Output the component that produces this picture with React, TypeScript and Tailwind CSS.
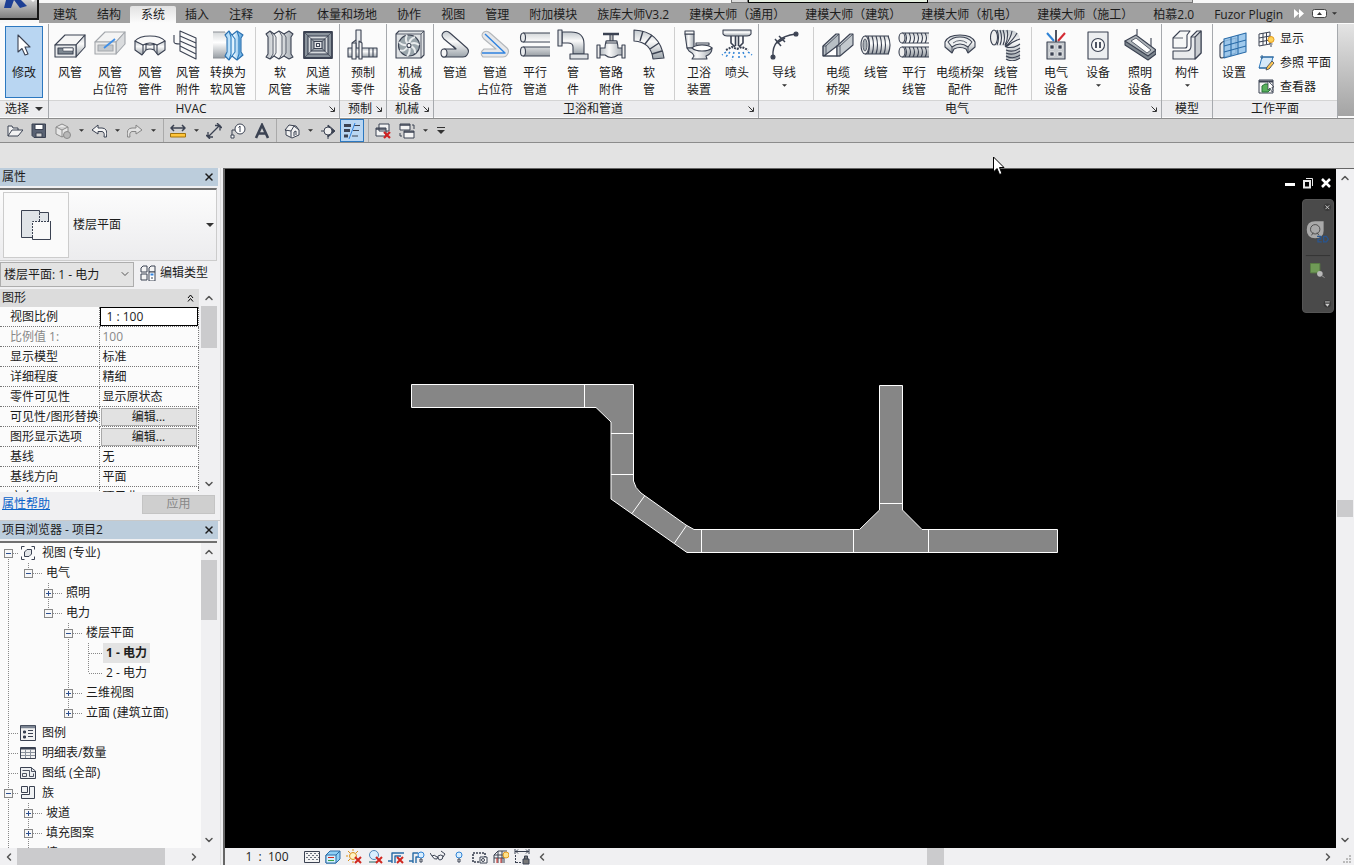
import React from "react";
import { ChevronDown, ChevronLeft, ChevronRight, ChevronUp, X } from "lucide-react";

const INK = "#3b4252";

const icons: Record<string, React.ReactNode> = {
  duct: (
    <>
      <path d="M1 16 11 6H31L22 16Z" fill="#f6f6f6" />
      <path d="M22 16 31 6V18L22 28Z" fill="url(#metal)" />
      <path d="M1 16H22V28H1Z" fill="#e8eaec" />
      <path d="M4 19H19V25H4Z" fill="#7d8791" />
      <path d="M9 19H19V22H9Z" fill="#fff" strokeWidth="0.6" />
    </>
  ),
  ductHolder: (
    <>
      <g stroke="#a3a7ac">
        <path d="M1 13 11 3H31L22 13Z" fill="#f4f4f4" />
        <path d="M22 13 31 3V15L22 25Z" fill="#dadcde" />
        <path d="M1 13H22V25H1Z" fill="#ececec" />
        <path d="M4 16H19V22H4Z" fill="#c4c8cc" />
      </g>
      <path d="M10 19 21 10" stroke="#3f8fe8" strokeWidth="1.800" />
    </>
  ),
  ductFitting: (
    <>
      <path d="M1 12V21L8 26L12 21Q16 19 20 21L24 26L31 21V12L24 14Q16 18 8 14Z" fill="url(#metal)" />
      <path d="M1 12Q5 7 16 7T31 12L23 16Q16 12 9 16Z" fill="#f9f9f9" />
      <path d="M9 16V25M23 16V25M12 15V21M20 15V21" />
    </>
  ),
  ductAccessory: (
    <>
      <path d="M8 2V22L24 30V9Z" fill="#fafafa" />
      <path d="M8 7 24 14M8 12 24 19M8 17 24 25M2 6V13Q2 15 8 15" fill="none" />
    </>
  ),
  toFlex: (
    <>
      <path d="M1 3H14V29H1Z" fill="url(#pipeH)" stroke="none" />
      <path d="M1 3H13M1 29H13" stroke="#8b9096" />
      <path d="M13 6 17 2 20 6 25 2 31 6 29 9V23L31 26 25 31 20 27 17 31 13 27 15 23V9Z" fill="url(#blue)" stroke="#2b6fae" />
      <path d="M17 2 19 8V25L17 31M25 2 27 8V25L25 31M20 6 23 10V23L20 27" fill="none" stroke="#2b7bbd" />
    </>
  ),
  flexDuct: (
    <>
      <path d="M2 5 6 2 10 5 15 2 20 5 25 2 29 5 27 8V25L29 28 25 30 20 27 15 30 10 27 6 30 2 28 4 25V8Z" fill="url(#metalV)" />
      <path d="M6 2 9 7V25L6 30M15 2 18 7V25L15 30M10 5 12 8V24L10 27M20 5 22 8V24L20 27" strokeWidth="0.800" fill="none" />
    </>
  ),
  airTerminal: (
    <>
      <path d="M2 3H30V29H2Z" fill="#8a939c" strokeWidth="1.800" />
      <path d="M6 7H26V25H6Z" fill="#d5d9dc" />
      <path d="M9 10H23V22H9Z" fill="#a1a8af" />
      <path d="M12 12.500H20V19.500H12Z" fill="#e4e6e8" />
      <path d="M2 3 12 12.500M30 3 20 12.500M2 29 12 19.500M30 29 20 19.500" strokeWidth="0.800" />
      <path d="M14.500 14.500H17.500V17.500H14.500Z" fill="#f8f8f8" />
    </>
  ),
  fabrication: (
    <>
      <path d="M9 1H14V20H9Z" fill="#eceef0" />
      <path d="M1 19H30V28H1Z" fill="url(#metal)" />
      <path d="M5 14H9V30H5ZM12 12 15 14V30H12Z" fill="#f3f3f3" />
      <path d="M5 14 9 11M22 19V28M26 19V28" fill="none" />
    </>
  ),
  mechanical: (
    <>
      <path d="M2 5 5 2H30V26L27 29H2Z" fill="#dfe2e4" />
      <path d="M2 5H27V29M27 5 30 2" fill="none" strokeWidth="0.800" />
      <circle cx="15" cy="16.500" r="10.500" fill="#9aa5ab" />
      <path d="M15 16Q10 12 13 6M15 16Q15 10 21 8M15 16Q20 12 25 16M15 16Q22 19 21 24M15 16Q17 24 13 27M15 16Q10 24 6 21M15 16Q8 17 5 13" stroke="#e9ecee" strokeWidth="2" fill="none" />
      <circle cx="15" cy="16.500" r="2" fill="#fff" />
    </>
  ),
  pipe: (
    <>
      <path d="M5 20H17L5 10Q1 6 5 3Q8 1 11 4L28 19Q31 22 28 26Q27 28 24 28H4Z" fill="url(#metal)" />
      <ellipse cx="5" cy="24" rx="3" ry="4" fill="#f5f5f5" />
      <path d="M17 20 14 17" fill="none" />
    </>
  ),
  pipeHolder: (
    <>
      <path d="M5 20H17L5 10Q1 6 5 3Q8 1 11 4L28 19Q31 22 28 26Q27 28 24 28H4Q0 24 5 20Z" fill="#e6e7e9" stroke="#b3b7bb" />
      <path d="M6 5 26 24H3" fill="none" stroke="#2f83e0" strokeWidth="1.400" />
    </>
  ),
  parallelPipe: (
    <>
      <path d="M4 4H31V13H4ZM4 18H31V27H4Z" fill="url(#pipeH)" stroke="none" />
      <path d="M4 4H31M4 13H31M4 18H31M4 27H31" />
      <ellipse cx="4" cy="8.500" rx="2.500" ry="4.500" fill="#e8eaec" />
      <ellipse cx="4" cy="22.500" rx="2.500" ry="4.500" fill="#e8eaec" />
    </>
  ),
  pipeFitting: (
    <>
      <path d="M5 3H14Q27 3 27 15V25H16V18Q16 14 11 14H5Z" fill="url(#metal)" />
      <path d="M1 1H5V17H1ZM13 25H31V30H13Z" fill="#dfe2e5" />
    </>
  ),
  valve: (
    <>
      <path d="M15 5H18V13H15Z" fill="#bbb" />
      <path d="M8 5H24" strokeWidth="2.500" />
      <path d="M5 19H10Q10 14 12 12H21Q23 14 23 19H28V26H23Q16 31 10 26H5Z" fill="url(#metalV)" />
      <path d="M2 16H5V29H2ZM27 16H30V29H27ZM11 12H22V14H11Z" fill="#eee" />
    </>
  ),
  flexPipe: (
    <>
      <path d="M1 1Q27 2 31 29L20 30Q18 13 1 12Z" fill="url(#metal)" />
      <path d="M10 2 7 12M19 6 12 15M26 14 17 20M29 22 19 25" strokeWidth="1.400" />
    </>
  ),
  toilet: (
    <>
      <path d="M2 5H11V19H4Z" fill="url(#metalV)" />
      <path d="M2 2H11V5H2ZM13 14H26V16H13Z" fill="#f8f8f8" />
      <path d="M4 19H29Q29 25 23 27L24 30H9L11 27Q10 24 6 22Z" fill="url(#metalV)" />
      <path d="M9 19Q12 16 19 16T29 19Q26 22 19 22T9 19Z" fill="#fff" />
    </>
  ),
  sprinkler: (
    <>
      <path d="M2 1H30V5Q29 7 26 7H6Q3 7 2 5Z" fill="url(#metal)" />
      <path d="M10 7V14L14 18M22 7V14L18 18M14.500 7V17M17.500 7V17" fill="none" strokeWidth="1.600" />
      <path d="M5 21 11 18 16 20 21 18 27 21" fill="none" strokeWidth="2" strokeDasharray="2 1" />
      <path d="M5 23 1 26M9 23 4 29M13 23 11 31M18 23V31M22 23 25 30M27 23 31 26" stroke="#2f83d6" strokeWidth="1.500" strokeDasharray="2 2" />
    </>
  ),
  wire: (
    <>
      <path d="M5 28Q3 8 28 5" fill="none" strokeWidth="1.300" />
      <circle cx="5" cy="28" r="2" fill={INK} />
      <circle cx="28" cy="5" r="2" fill={INK} />
      <path d="M7 10 13 17M11 7 17 13M9 14 17 9" strokeWidth="1.500" />
    </>
  ),
  cableTray: (
    <>
      <path d="M1 17 14 5H17V16L6 25 1 27Z" fill="#b8bfc5" />
      <path d="M2 27 15 17V27Z" fill="#fff" />
      <path d="M15 17 28 5H31V16L18 27H15Z" fill="#c3c9ce" />
      <path d="M1 17V27H18V17M18 17 31 5M15 17H18M1 17H4L17 5M4 17V25" fill="none" strokeWidth="0.800" />
    </>
  ),
  conduit: (
    <>
      <path d="M4 7H29Q32 16 29 25H4Z" fill="url(#pipeH)" stroke="none" />
      <path d="M8 7Q11 16 8 25M12 7Q15 16 12 25M16 7Q19 16 16 25M20 7Q23 16 20 25M24 7Q27 16 24 25M28 7Q32 16 28 25M5 7H29M5 25H29" fill="none" />
      <ellipse cx="5" cy="16" rx="4" ry="9" fill="#f1f1f1" />
      <ellipse cx="5" cy="16" rx="2" ry="6" fill="#aab0b6" strokeWidth="0.800" />
    </>
  ),
  parallelConduit: (
    <>
      <path d="M4 4H31V14H4ZM4 18H31V28H4Z" fill="url(#pipeH)" stroke="none" />
      <path d="M7 4Q10 9 7 14M11 4Q14 9 11 14M15 4Q18 9 15 14M19 4Q22 9 19 14M23 4Q26 9 23 14M27 4Q30 9 27 14M7 18Q10 23 7 28M11 18Q14 23 11 28M15 18Q18 23 15 28M19 18Q22 23 19 28M23 18Q26 23 23 28M27 18Q30 23 27 28M4 4H31M4 14H31M4 18H31M4 28H31" fill="none" />
      <ellipse cx="4" cy="9" rx="3" ry="5" fill="#eee" />
      <ellipse cx="4" cy="23" rx="3" ry="5" fill="#eee" />
    </>
  ),
  trayFitting: (
    <>
      <path d="M1 13Q4 6 16 6T31 13V18L24 24 22 20Q16 17 10 20L8 24 1 18Z" fill="url(#metal)" />
      <path d="M4 13Q8 8 16 8T28 13L24 18Q16 12 8 18Z" fill="#eff1f2" />
      <path d="M8 18V23M24 18V23M9 14Q16 9 23 14" fill="none" strokeWidth="0.800" />
    </>
  ),
  conduitFitting: (
    <>
      <path d="M4 1H19Q31 1 30 15V29Q23 32 16 29V17H4Z" fill="url(#metal)" stroke="none" />
      <path d="M7 1Q10 9 7 16M10 1Q13 9 10 16M13 1Q16 9 13 16M17 1Q19 8 15 16M22 2Q21 9 15 17M27 4Q24 10 15 18M30 10Q23 12 16 18M30 15Q23 20 16 18M30 19Q23 24 16 21M30 22Q23 27 16 24M30 26Q23 31 16 27M30 29Q23 34 16 30" fill="none" />
      <ellipse cx="4" cy="8.500" rx="3.500" ry="7.500" fill="#eee" />
    </>
  ),
  electrical: (
    <>
      <path d="M16 13V1" strokeWidth="1.800" />
      <path d="M14 12 7 4" stroke="#2f83d6" strokeWidth="2" />
      <path d="M18 12 25 4" stroke="#d42b33" strokeWidth="2" />
      <path d="M7 13H25V30H7Z" fill="#c5c9cd" />
      <path d="M10 16H14V20H10ZM18 16H22V20H18ZM10 23H14V27H10ZM18 23H22V27H18Z" fill={INK} stroke="#fff" strokeWidth="0.600" />
    </>
  ),
  device: (
    <>
      <path d="M6 3H26V30H6Z" fill="#eceef0" />
      <circle cx="16" cy="16" r="6.500" fill="#f8f8f8" />
      <path d="M14 13V19M18 13V19" strokeWidth="1.800" />
    </>
  ),
  lighting: (
    <>
      <path d="M13 0V6M27 9V18" />
      <path d="M1 12V16L24 31 32 25V21Z" fill="#7d868e" />
      <path d="M1 12 12 6 32 21 24 27Z" fill="#aeb4b9" />
      <path d="M7 12 12 9 27 21 23 24Z" fill="#fff" strokeWidth="0.800" />
    </>
  ),
  component: (
    <>
      <path d="M2 9 9 2H19L16 6V17Q16 19 14 19H2Z" fill="#f6f7f7" />
      <path d="M20 8 26 2H30V24L24 30H2V22H15Q20 22 20 17Z" fill="#e9ebed" />
      <path d="M30 2V24L24 30V8Z" fill="#c9cdd1" />
      <path d="M20 8H24M2 9H12" fill="none" strokeWidth="0.800" />
    </>
  ),
  workPlane: (
    <>
      <path d="M2 16Q3 13 7 12L18 9V24L4 29Q2 29 2 27Z" fill="#e9ebed" />
      <path d="M6 10 28 4V23L6 29Z" fill="#8fc1ea" fillOpacity="0.850" stroke="#2b6ca8" />
      <path d="M13 8V27M20 6V25M6 17 28 11M6 23 28 17" stroke="#2b6ca8" />
    </>
  ),
  modify: <path d="M10 5V22L14 18.500 17 25 20 24 17 17H22Z" fill="#fff" />,
};

function BigIcon({ name }: { name: string }) {
  return (
    <svg viewBox="0 0 32 32" className="size-8 shrink-0" stroke={INK} strokeWidth="1.1" strokeLinejoin="round">
      {icons[name]}
    </svg>
  );
}

type Tool = { icon: string; lines: string[]; width?: string; menu?: boolean };
type Panel = { title: string; launcher?: boolean; pad: string; groups: Tool[][] };

const panels: Panel[] = [
  {
    title: "HVAC",
    launcher: true,
    pad: "px-0.5",
    groups: [
      [
        { icon: "duct", lines: ["风管"] },
        { icon: "ductHolder", lines: ["风管", "占位符"], width: "w-[42px]" },
        { icon: "ductFitting", lines: ["风管", "管件"] },
        { icon: "ductAccessory", lines: ["风管", "附件"] },
        { icon: "toFlex", lines: ["转换为", "软风管"], width: "w-[42px]" },
      ],
      [
        { icon: "flexDuct", lines: ["软", "风管"] },
        { icon: "airTerminal", lines: ["风道", "末端"] },
      ],
    ],
  },
  { title: "预制", launcher: true, pad: "px-1", groups: [[{ icon: "fabrication", lines: ["预制", "零件"] }]] },
  { title: "机械", launcher: true, pad: "px-1", groups: [[{ icon: "mechanical", lines: ["机械", "设备"] }]] },
  {
    title: "卫浴和管道",
    launcher: true,
    pad: "px-0.5",
    groups: [
      [
        { icon: "pipe", lines: ["管道"] },
        { icon: "pipeHolder", lines: ["管道", "占位符"], width: "w-[42px]" },
        { icon: "parallelPipe", lines: ["平行", "管道"] },
        { icon: "pipeFitting", lines: ["管", "件"] },
        { icon: "valve", lines: ["管路", "附件"] },
        { icon: "flexPipe", lines: ["软", "管"] },
      ],
      [
        { icon: "toilet", lines: ["卫浴", "装置"] },
        { icon: "sprinkler", lines: ["喷头"] },
      ],
    ],
  },
  {
    title: "电气",
    launcher: true,
    pad: "px-0.5",
    groups: [
      [{ icon: "wire", lines: ["导线"], width: "w-[46px]", menu: true }],
      [
        { icon: "cableTray", lines: ["电缆", "桥架"] },
        { icon: "conduit", lines: ["线管"] },
        { icon: "parallelConduit", lines: ["平行", "线管"] },
        { icon: "trayFitting", lines: ["电缆桥架", "配件"], width: "w-[54px]" },
        { icon: "conduitFitting", lines: ["线管", "配件"] },
      ],
      [
        { icon: "electrical", lines: ["电气", "设备"] },
        { icon: "device", lines: ["设备"], width: "w-[46px]", menu: true },
        { icon: "lighting", lines: ["照明", "设备"] },
      ],
    ],
  },
  { title: "模型", pad: "px-1.5", groups: [[{ icon: "component", lines: ["构件"], menu: true }]] },
];

const tabs = [
  "建筑", "结构", "系统", "插入", "注释", "分析", "体量和场地", "协作", "视图", "管理", "附加模块", "族库大师V3.2",
  "建模大师（通用）", "建模大师（建筑）", "建模大师（机电）", "建模大师（施工）", "柏慕2.0", "Fuzor Plugin",
];

function Caret({ big }: { big?: boolean }) {
  return (
    <svg viewBox="0 0 8 4" className={big ? "h-1 w-2" : "h-[3px] w-[5px]"}>
      <path d="M0 0H8L4 4Z" fill="#333" />
    </svg>
  );
}

function ToolButton({ tool }: { tool: Tool }) {
  return (
    <button className={`${tool.width ?? "w-[38px]"} flex flex-col items-center pt-[5px] hover:bg-[#d6e8f8]`}>
      <BigIcon name={tool.icon} />
      <span className="mt-[3px] leading-[17px] whitespace-nowrap">
        {tool.lines.map((line) => (
          <span key={line} className="block">{line}</span>
        ))}
      </span>
      {tool.menu && <span className="mt-[3px]"><Caret /></span>}
    </button>
  );
}

function PanelFrame({ title, launcher, children }: { title: React.ReactNode; launcher?: boolean; children: React.ReactNode }) {
  return (
    <section className="flex flex-col border-r border-[#a6a9ad] bg-[#fbfbfb]">
      <div className="flex h-[76px]">{children}</div>
      <div className="flex h-[17px] items-center border-t border-[#d4d4d4] bg-[#ececee] px-1">
        <h2 className="flex flex-1 items-center justify-center gap-1.5">{title}</h2>
        {launcher && (
          <button aria-label="对话框">
            <svg viewBox="0 0 6 6" className="size-1.5" stroke="#333" fill="none"><path d="M0.500 0.500 5 5M5.500 1.500V5.500H1.500" /></svg>
          </button>
        )}
      </div>
    </section>
  );
}

function Ribbon() {
  return (
    <div className="flex h-24 border-b border-[#8c8c8c] bg-[#fbfbfb] pt-px">
      <PanelFrame title={<>选择 <Caret big /></>}>
        <button className="mt-0.5 mr-[5px] ml-[5px] flex h-[72px] w-[38px] flex-col items-center border border-[#2c78c0] bg-[#b9d6f2] pt-[3px]">
          <BigIcon name="modify" />
          <span className="mt-0.5 leading-[17px]">修改</span>
        </button>
      </PanelFrame>
      {panels.map((panel) => (
        <PanelFrame key={panel.title} title={panel.title} launcher={panel.launcher}>
          <div className={`flex ${panel.pad}`}>
            {panel.groups.map((group, i) => (
              <React.Fragment key={i}>
                {i > 0 && <div className="mr-[5px] ml-1.5 mt-[3px] w-px bg-[#cfcfcf]" />}
                {group.map((tool) => <ToolButton key={tool.icon} tool={tool} />)}
              </React.Fragment>
            ))}
          </div>
        </PanelFrame>
      ))}
      <PanelFrame title="工作平面">
        <div className="flex px-0.5">
          <ToolButton tool={{ icon: "workPlane", lines: ["设置"] }} />
          <div className="flex flex-col pt-[3px] pr-1 pl-[5px]">
            <button className="flex h-6 items-center gap-1 text-left">
              <svg viewBox="0 0 18 16" className="h-4 w-[18px]" stroke={INK} fill="none">
                <path d="M1 3 12 1V13L1 15ZM5 2V14M8.500 2V13M1 7 12 5M1 11 12 9" />
                <circle cx="13" cy="8.500" r="3" fill="#ffd257" stroke="#e39b1e" />
                <path d="M11.500 13H14.500M12 15H14" />
              </svg>
              显示
            </button>
            <button className="flex h-6 items-center gap-1 whitespace-nowrap">
              <svg viewBox="0 0 18 16" className="h-4 w-[18px]" stroke="#2b78bd">
                <path d="M4 2H15L12 13H1Z" fill="#d5e9f9" />
                <path d="M2 2H16M4 0V4M1 13H12" fill="none" stroke="#265e92" />
                <path d="M8 15 9 12 14 6 16 8 11 14Z" fill="#ffc752" stroke={INK} strokeWidth="0.800" />
              </svg>
              参照 平面
            </button>
            <button className="flex h-6 items-center gap-1">
              <svg viewBox="0 0 18 16" className="h-4 w-[18px]" stroke={INK}>
                <path d="M1 1H15V14H1Z" fill="#f5f5f5" />
                <path d="M1 2.500H15" strokeWidth="2" />
                <path d="M4 7 7 5H12V11L10 13H4Z" fill="#58b05c" stroke="#26733a" />
                <path d="M10 2V11L12 9 14 13 15 12 14 8H16Z" fill="#fff" strokeWidth="0.800" />
              </svg>
              查看器
            </button>
          </div>
        </div>
      </PanelFrame>
      <div className="mb-0.5 flex-1 bg-linear-to-b from-[#e4e4e4] to-[#a4a4a4]" />
    </div>
  );
}

function Header() {
  return (
    <header className="flex h-[23px] bg-[#f8f8f8]">
      <button aria-label="应用程序菜单" className="h-5 w-[39px] shrink-0 border-r-2 border-b-2 border-[#161616] bg-linear-to-b from-[#cfcfcf] to-[#7f7f7f]">
        <svg viewBox="0 0 37 18" className="h-[18px] w-[37px]">
          <path d="M6 0H14L11 8H4Z" fill="#1d3f94" />
          <path d="M14 0H21L27 6 20 8Z" fill="#1d3f94" />
          <path d="M31 0H35L33 2Z" fill="#fff" />
        </svg>
      </button>
      <div className="flex min-w-0 flex-1 flex-col">
        <div className="flex h-[3px] shrink-0">
          <div className="flex-[695]" />
          <div className="flex-[15] border border-[#777] border-t-0 bg-[#ddd]" />
          <div className="flex-[178] border-x border-b border-black bg-[#e8f2e2]" />
          <div className="flex-[265] border-r border-b border-[#777] bg-[#ccc]" />
          <div className="flex-[162]" />
        </div>
        <nav className="flex flex-1 items-stretch bg-[#a0a0a0] pl-1">
          {tabs.map((tab) => (
            <button
              key={tab}
              className={`px-2.5 whitespace-nowrap ${tab === "系统" ? "-mx-px mt-[3px] rounded-t-xs bg-linear-to-b from-[#e2e2e2] to-[#fbfbfb] px-[11px] leading-4" : "pt-1"}`}
            >
              {tab}
            </button>
          ))}
          <button aria-label="更多选项卡" className="mr-2 ml-px">
            <svg viewBox="0 0 10 9" className="h-[9px] w-2.5" fill="#fff"><path d="M0 0 5 4.500 0 9ZM5 0 10 4.500 5 9Z" /></svg>
          </button>
          <button aria-label="最小化功能区" className="flex items-center gap-[5px]">
            <svg viewBox="0 0 15 9" className="h-[9px] w-[15px]"><rect x="0.500" y="0.500" width="14" height="8" rx="2" fill="#fff" stroke="#444" /><path d="M5 6H10L7.500 3Z" fill="#333" /></svg>
            <Caret />
          </button>
        </nav>
      </div>
    </header>
  );
}

function QuickButton({ label, children, className = "w-6" }: { label: string; children: React.ReactNode; className?: string }) {
  return (
    <button aria-label={label} className={`flex shrink-0 items-center justify-center ${className}`}>
      {children}
    </button>
  );
}

function SmallIcon({ children }: { children: React.ReactNode }) {
  return (
    <svg viewBox="0 0 16 16" className="size-4" fill="none" stroke={INK} strokeWidth="1" strokeLinejoin="round">
      {children}
    </svg>
  );
}

function MenuArrow() {
  return <QuickButton label="更多" className="w-3"><Caret /></QuickButton>;
}

function QuickAccess() {
  return (
    <div className="flex h-6 border-b border-[#8c8c8c] bg-[#d2d2d2] pl-[3px]">
      <QuickButton label="打开">
        <SmallIcon><path d="M1 13V3H5L6 5H11V7M1 13 5 7H16L11 13Z" fill="#f2f2f2" /></SmallIcon>
      </QuickButton>
      <QuickButton label="保存">
        <SmallIcon>
          <path d="M1 1H14.500V14.500H3L1 12.500Z" fill="#596273" />
          <path d="M4 1.500H12V6.500H4Z" fill="#fff" />
          <path d="M5 10H11V14H5Z" fill="#d2d2d2" />
        </SmallIcon>
      </QuickButton>
      <QuickButton label="同步">
        <SmallIcon>
          <path d="M1 4 7 1 13 4V11L7 14 1 11ZM1 4 7 7 13 4M7 7V14" stroke="#8a8a8a" fill="#e6e6e6" />
          <circle cx="12" cy="12" r="3.500" fill="#b8b8b8" stroke="#8a8a8a" />
        </SmallIcon>
      </QuickButton>
      <MenuArrow />
      <QuickButton label="放弃">
        <SmallIcon><path d="M7 2 1 7 7 11V8.500H11Q14 9 13 14H15.500Q17 5 11 5H7Z" fill="#f4f4f4" /></SmallIcon>
      </QuickButton>
      <MenuArrow />
      <QuickButton label="重做">
        <SmallIcon><path d="M9 2 15 7 9 11V8.500H5Q2 9 3 14H0.500Q-1 5 5 5H9Z" fill="#e2e2e2" stroke="#858585" /></SmallIcon>
      </QuickButton>
      <MenuArrow />
      <div className="mr-0.5 ml-1 w-px bg-[#aaa]" />
      <QuickButton label="测量">
        <SmallIcon>
          <path d="M1 5H15M4 2 1 5 4 8M12 2 15 5 12 8" strokeWidth="1.500" />
          <path d="M0.500 10.500H15.500V14H0.500Z" fill="#ffc53a" stroke="#a2730d" />
        </SmallIcon>
      </QuickButton>
      <MenuArrow />
      <QuickButton label="对齐尺寸标注">
        <SmallIcon><path d="M2 14 14 2M9 2.500H14V7.500M2 9V14H7M0 12 4 16M11 0 16 5" strokeWidth="1.300" /></SmallIcon>
      </QuickButton>
      <QuickButton label="按类别标记">
        <SmallIcon>
          <circle cx="10" cy="6" r="5" fill="#fff" />
          <path d="M10 3V9M8.500 4.500 10 3M5 7H2V12" />
          <path d="M1 12H4V15H1Z" fill="#fff" />
        </SmallIcon>
      </QuickButton>
      <QuickButton label="文字">
        <SmallIcon><path d="M2 15 8 2 14 15M4.500 10.500H11.500" strokeWidth="2.600" strokeLinejoin="miter" /></SmallIcon>
      </QuickButton>
      <div className="mr-[3px] ml-0.5 w-px bg-[#aaa]" />
      <QuickButton label="默认三维视图">
        <SmallIcon>
          <path d="M1 7 5 2 12 3 15 7V12L8 15 2 12V7Z" fill="#f1f1f1" />
          <path d="M1 7 7 8 10 3 15 7M7 8V14M10 13V9L12 8V12" />
        </SmallIcon>
      </QuickButton>
      <MenuArrow />
      <QuickButton label="剖面">
        <SmallIcon>
          <path d="M8 2 15 8 8 14Z" fill={INK} />
          <circle cx="8" cy="8" r="4" fill="#eee" />
          <path d="M1 8H4M8 12V16" />
        </SmallIcon>
      </QuickButton>
      <QuickButton label="细线" className="w-6 border border-[#2c78c0] bg-[#b9d6f2]">
        <SmallIcon>
          <path d="M0 2.500H7M0 7.500H6M0 13H4" strokeWidth="3" />
          <path d="M10 2.500H16M9 7.500H15M8 13H14" />
          <path d="M11 0 5 16" stroke="#2f83e0" />
        </SmallIcon>
      </QuickButton>
      <div className="mr-0.5 ml-1 w-px bg-[#aaa]" />
      <QuickButton label="关闭隐藏窗口">
        <SmallIcon>
          <path d="M4 1H14V8H4ZM1 5H11V13H1Z" fill="#f4f4f4" />
          <path d="M1 6H11" strokeWidth="1.500" />
          <path d="M9 9 15 15M15 9 9 15" stroke="#cf2222" strokeWidth="2.200" />
        </SmallIcon>
      </QuickButton>
      <QuickButton label="切换窗口">
        <SmallIcon>
          <path d="M1 1H11V7H1ZM5 8H15V15H5Z" fill="#f4f4f4" />
          <path d="M1 2H11M5 9H15" strokeWidth="1.500" />
          <path d="M13 2H15V6M1 10V13H3" />
        </SmallIcon>
      </QuickButton>
      <MenuArrow />
      <QuickButton label="自定义快速访问工具栏" className="w-5">
        <svg viewBox="0 0 8 8" className="size-2"><path d="M0 0.500H8" stroke="#333" /><path d="M0 3H8L4 7Z" fill="#333" /></svg>
      </QuickButton>
    </div>
  );
}

function PaletteTitle({ children }: { children: React.ReactNode }) {
  return (
    <div className="mr-0.5 flex h-[18px] shrink-0 items-center justify-between bg-[#bccddc] pr-[3px] pl-0.5">
      <h2>{children}</h2>
      <button aria-label="关闭"><X className="size-3" strokeWidth={3} /></button>
    </div>
  );
}

function VScroll({ thumb }: { thumb: string }) {
  return (
    <div className="flex w-4 shrink-0 flex-col items-center bg-[#f0f0f2]">
      <button aria-label="向上滚动" className="flex h-[17px] items-center"><ChevronUp className="size-3 text-[#555]" strokeWidth={3} /></button>
      <div className="flex w-full flex-1 flex-col"><div className={`w-full bg-[#cbcbcd] ${thumb}`} /></div>
      <button aria-label="向下滚动" className="flex h-[17px] items-center"><ChevronDown className="size-3 text-[#555]" strokeWidth={3} /></button>
    </div>
  );
}

const properties = [
  { name: "视图比例", value: "1 : 100", kind: "input" },
  { name: "比例值 1:", value: "100", kind: "disabled" },
  { name: "显示模型", value: "标准" },
  { name: "详细程度", value: "精细" },
  { name: "零件可见性", value: "显示原状态" },
  { name: "可见性/图形替换", value: "编辑...", kind: "button" },
  { name: "图形显示选项", value: "编辑...", kind: "button" },
  { name: "基线", value: "无" },
  { name: "基线方向", value: "平面" },
  { name: "方向", value: "项目北" },
];

function PropertyValue({ name, value, kind }: { name: string; value: string; kind?: string }) {
  if (kind === "input") return <input aria-label={name} defaultValue={value} className="block h-[19px] w-full border border-black bg-white px-1.5" />;
  if (kind === "button") return <button className="mx-px block h-[18px] w-[96px] border border-[#a9a9a9] bg-[#e2e2e2] leading-4">{value}</button>;
  return <span className="pl-[3px]">{value}</span>;
}

function Properties() {
  return (
    <section className="flex h-[353px] shrink-0 flex-col border-b border-[#c9c9c9] bg-[#f0f0f2]">
      <PaletteTitle>属性</PaletteTitle>
      <button className="mt-0.5 mr-[3px] flex h-[73px] shrink-0 items-center border-t-2 border-r border-b border-[#707070] border-r-[#ccc] border-b-[#ccc] bg-linear-to-b from-[#fcfcfc] to-[#ececee] pr-0.5 pl-[3px]">
        <span className="flex size-[66px] items-center justify-center border border-[#ccc] bg-[#fafafa]">
          <svg viewBox="0 0 32 32" className="size-8" stroke={INK}>
            <path d="M1.500 1.500H19.500V3.500H28.500V12.500H12.500V28.500H1.500Z" fill="#e0e4e8" stroke="none" />
            <path d="M12.500 28.500H1.500V1.500H19.500V3.500H28.500V12.500" fill="none" />
            <path d="M12.500 12.500H30.500V30.500H12.500Z" fill="#f9f9f9" stroke="none" />
            <path d="M19.500 4V12.500M12.500 28V12.500H30" fill="none" strokeDasharray="2 1" />
            <path d="M30.500 12V30.500H12.500V28" fill="none" />
          </svg>
        </span>
        <span className="ml-1 flex-1 text-left">楼层平面</span>
        <Caret big />
      </button>
      <div className="mt-px flex h-[25px] shrink-0 items-center">
        <div className="relative h-full">
          <select aria-label="类型过滤器" className="h-full w-[134px] appearance-none border border-[#adadad] bg-[#e3e3e3] pl-[3px]">
            <option>楼层平面: 1 - 电力</option>
          </select>
          <ChevronDown className="pointer-events-none absolute top-1.5 right-[3px] size-3 text-[#555]" />
        </div>
        <button className="mb-1 ml-1.5 flex items-center gap-1 whitespace-nowrap">
          <SmallIcon>
            <path d="M1 7V3L3 1H7V7ZM9 7V3L11 1H15V7ZM1 15V9H7V15ZM9 9H15" fill="#f4f4f4" />
            <path d="M9 7H15V16H9Z" fill="#fff" />
            <path d="M10.500 9.500H13.500" stroke="#2f83e0" strokeWidth="2" />
            <path d="M11 13H13" />
          </SmallIcon>
          编辑类型
        </button>
      </div>
      <div className="mt-0.5 mr-[3px] flex min-h-0 flex-1">
        <div className="mr-0.5 flex-1 overflow-hidden bg-[#fbfbfb]">
          <div className="flex h-[18px] items-center justify-between bg-[#dcdcdc] pr-[5px] pl-0.5">
            <h3>图形</h3>
            <button aria-label="折叠">
              <svg viewBox="0 0 7 8" className="h-2 w-[7px]" stroke="#000" fill="none"><path d="M1 4 3.500 1 6 4M1 7.500 3.500 4.500 6 7.500" /></svg>
            </button>
          </div>
          <table className="w-full table-fixed border-separate border-spacing-0 leading-4">
            <tbody>
              {properties.map((row) => (
                <tr key={row.name} className={row.kind === "disabled" ? "text-[#888]" : ""}>
                  <th scope="row" className="h-5 overflow-hidden border-r border-b border-dotted border-[#777] p-0 pl-2.5 text-left font-normal whitespace-nowrap">{row.name}</th>
                  <td className="h-5 border-r border-b border-dotted border-[#777] p-0"><PropertyValue {...row} /></td>
                </tr>
              ))}
            </tbody>
          </table>
        </div>
        <VScroll thumb="h-[42px]" />
      </div>
      <div className="mb-1.5 flex h-[22px] shrink-0 items-center justify-between pr-[5px] pl-0.5">
        <a href="#help" className="mt-0.5 text-[#0a63c9] underline">属性帮助</a>
        <button disabled className="mt-0.5 h-[19px] w-[73px] border border-[#c4c4c4] bg-[#cfcfcf] leading-4 text-[#888]">应用</button>
      </div>
    </section>
  );
}

type Cell = "blank" | "line" | "tee" | "end" | "open-first" | "open-last" | "open" | "closed" | "closed-last";
type TreeRow = { cells: Cell[]; text: string; icon?: string; selected?: boolean };

const tree: TreeRow[] = [
  { cells: ["open-first"], text: "视图 (专业)", icon: "views" },
  { cells: ["line", "open-last"], text: "电气" },
  { cells: ["line", "blank", "closed"], text: "照明" },
  { cells: ["line", "blank", "open-last"], text: "电力" },
  { cells: ["line", "blank", "blank", "open"], text: "楼层平面" },
  { cells: ["line", "blank", "blank", "line", "tee"], text: "1 - 电力", selected: true },
  { cells: ["line", "blank", "blank", "line", "end"], text: "2 - 电力" },
  { cells: ["line", "blank", "blank", "closed"], text: "三维视图" },
  { cells: ["line", "blank", "blank", "closed-last"], text: "立面 (建筑立面)" },
  { cells: ["tee"], text: "图例", icon: "legend" },
  { cells: ["tee"], text: "明细表/数量", icon: "schedule" },
  { cells: ["tee"], text: "图纸 (全部)", icon: "sheet" },
  { cells: ["open"], text: "族", icon: "family" },
  { cells: ["line", "closed"], text: "坡道" },
  { cells: ["line", "closed"], text: "填充图案" },
  { cells: ["line", "closed"], text: "墙" },
];

const treeIcons: Record<string, React.ReactNode> = {
  views: (
    <>
      <path d="M1.500 4.500V1.500H4.500M11.500 1.500H14.500V4.500M14.500 11.500V14.500H11.500M4.500 14.500H1.500V11.500" />
      <path d="M4.500 7 7 4.500H11.500V9L9 11.500H4.500Z" fill="#e3e6e9" />
    </>
  ),
  legend: (
    <>
      <path d="M0.500 0.500H15.500V15.500H0.500Z" fill="#f2f2f2" />
      <path d="M1 2H15" strokeWidth="2.500" stroke="#7b8492" />
      <path d="M3.500 6H5.500V8H3.500ZM3.500 11H5.500V13H3.500Z" fill={INK} />
      <path d="M8 5.500H13M8 8.500H13M8 11.500H13" />
    </>
  ),
  schedule: (
    <>
      <path d="M0.500 2.500H15.500V13.500H0.500Z" fill="#f2f2f2" />
      <path d="M1 3.500H15" strokeWidth="2" />
      <path d="M1 7.500H15M1 10.500H15M5.500 4V13M10.500 4V13" stroke="#8a919c" />
    </>
  ),
  sheet: (
    <>
      <path d="M0.500 2.500H11L15.500 6V13.500H0.500Z" fill="#eef0f2" />
      <path d="M11.500 2.500V6.500H15.500M2.500 11.500V8.500H6.500V11.500ZM9.500 11.500V5.500H2.500M9.500 11.500H13.500V8.500" strokeWidth="0.900" />
    </>
  ),
  family: <path d="M1.500 1.500H7.500V7.500H1.500ZM9.500 1.500H14.500V13.500H1.500V9.500H9.500Z" fill="#f0f2f4" />,
};

function TreeCell({ cell, toIcon }: { cell: Cell; toIcon?: boolean }) {
  if (cell === "blank") return <span className="w-5 shrink-0" />;
  const up = cell !== "open-first";
  const down = !["end", "open-last", "closed-last"].includes(cell);
  const isNode = cell.startsWith("open") || cell.startsWith("closed");
  const drawing = (
    <svg viewBox="0 0 20 20" className="size-5 overflow-visible" stroke="#888" fill="none">
      {up && <path d="M10.500 0V10" strokeDasharray="1 1" />}
      {down && <path d="M10.500 10V20" strokeDasharray="1 1" />}
      {cell !== "line" && <path d={toIcon ? "M11 10.500H20" : "M11 10.500H25"} strokeDasharray="1 1" />}
      {isNode && <rect x="6.500" y="6.500" width="8" height="8" fill="#f7f7f7" />}
      {isNode && <path d={cell.startsWith("open") ? "M8 10.500H13" : "M8 10.500H13M10.500 8V13"} stroke="#2d4f8f" />}
    </svg>
  );
  return isNode ? <button aria-label="展开或折叠" className="w-5 shrink-0">{drawing}</button> : <span className="w-5 shrink-0">{drawing}</span>;
}

function Browser() {
  return (
    <section className="flex min-h-0 flex-1 flex-col">
      <PaletteTitle>项目浏览器 - 项目2</PaletteTitle>
      <div className="mt-0.5 mr-[3px] flex min-h-0 flex-1 border-t-2 border-[#707070]">
        <ul className="flex-1 overflow-hidden bg-[#fbfbfb]">
          {tree.map((row) => (
            <li key={row.text} className="-ml-0.5 flex h-5 items-center whitespace-nowrap">
              {row.cells.map((cell, i) => <TreeCell key={i} cell={cell} toIcon={!!row.icon} />)}
              {row.icon && <span className="mx-0.5"><SmallIcon>{treeIcons[row.icon]}</SmallIcon></span>}
              <span className={`px-[3px] leading-5 ${row.icon ? "ml-px" : "ml-[5px]"} ${row.selected ? "bg-[#e3e3e3] font-bold" : ""}`}>{row.text}</span>
            </li>
          ))}
        </ul>
        <VScroll thumb="h-[60px]" />
      </div>
      <div className="mr-[18px] flex h-[17px] shrink-0 items-center">
        <button aria-label="向左滚动" className="flex w-[17px] justify-center"><ChevronLeft className="size-3 text-[#555]" strokeWidth={3} /></button>
        <div className="flex h-full flex-1"><div className="h-full w-[148px] bg-[#cbcbcd]" /></div>
        <button aria-label="向右滚动" className="flex w-[17px] justify-center"><ChevronRight className="size-3 text-[#555]" strokeWidth={3} /></button>
      </div>
    </section>
  );
}

function NavBar() {
  return (
    <div className="absolute top-[30px] right-0.5 flex h-[114px] w-8 flex-col items-center rounded-sm border border-[#555] bg-[#4a4a4a]">
      <svg viewBox="0 0 32 114" className="h-full w-full" fill="none">
        <circle cx="26" cy="5" r="4" fill="#3a3a3a" />
        <path d="M24 3 28 7M28 3 24 7" stroke="#ccc" />
        <path d="M4 29Q4 20 13 20H22V30Q22 38 13 38T4 29Z" fill="#a9a9a9" />
        <circle cx="13" cy="28.500" r="5" stroke="#4a4a4a" />
        <path d="M9 35 11 32M17 35 15 32" stroke="#4a4a4a" />
        <path d="M15 36H19V39H16V42H20M22 36H25L27 39 25 42H22Z" stroke="#28558f" strokeWidth="1.400" />
        <path d="M3 56.500H29" stroke="#333" />
        <path d="M8 65H18V75H8Z" fill="#6f9a56" stroke="#587d43" />
        <circle cx="18" cy="76" r="3" fill="#b9b9b9" />
        <path d="M20 78 23 80" stroke="#999" />
        <circle cx="26" cy="108" r="4" fill="#3a3a3a" />
        <path d="M23.500 106H28.500" stroke="#ccc" />
        <path d="M23.500 108H28.500L26 111Z" fill="#ccc" />
      </svg>
    </div>
  );
}

function Drawing() {
  return (
    <main className="relative min-h-0 min-w-0 flex-1 overflow-hidden bg-black">
      <svg viewBox="225 169 1111 679" preserveAspectRatio="xMinYMin meet" className="absolute inset-0 h-full w-full" stroke="#fff" fill="none">
        <path
          d="M411.500 384.500H633.500V481Q635 488 641 493L686 525 694 529.500H859.500L879.500 510V385.500H902.500V510L922 529.500H1057.500V552.500H687L611 499V422L596 407.500H411.500Z"
          fill="#868686"
        />
        <path d="M584.500 385V407M611 433.500H633M611 474.500H633M644.500 496 632 513.500M686.500 525.500 674.500 543M701.500 530V552M853.500 530V552M928.500 530V552M880 503.500H902" />
      </svg>
      <div className="absolute top-2 right-1 flex gap-1.5">
        <button aria-label="最小化"><svg viewBox="0 0 12 12" className="size-3"><path d="M1 6H11V9H1Z" fill="#fff" /></svg></button>
        <button aria-label="还原"><svg viewBox="0 0 12 12" className="size-3" fill="none" stroke="#e8e8e8"><path d="M4 1.500H10.500V9" /><path d="M2 4H8V10.500H2Z" strokeWidth="2" /></svg></button>
        <button aria-label="关闭视图"><svg viewBox="0 0 12 12" className="size-3" stroke="#fff" strokeWidth="2.5"><path d="M2 2 10 10M10 2 2 10" /></svg></button>
      </div>
      <NavBar />
    </main>
  );
}

const bulb = (
  <>
    <circle cx="12" cy="6" r="3" fill="#d9efff" stroke="#2f83d6" />
    <path d="M11 10H13V13H11Z" />
  </>
);
const redCross = <path d="M9 8 15 14M15 8 9 14" stroke="#d0271f" strokeWidth="2" />;

const viewControls: { label: string; drawing: React.ReactNode }[] = [
  {
    label: "详细程度",
    drawing: (
      <>
        <path d="M0.500 2.500H15.500V13.500H0.500Z" fill="#f4f4f4" />
        <path d="M2 4.500H15M4 6.500H15M2 8.500H15M4 10.500H15" strokeDasharray="2 2" stroke="#6b7280" />
      </>
    ),
  },
  {
    label: "视觉样式",
    drawing: (
      <>
        <path d="M1 6 5 2H15V10L11 14H1Z" fill="#8fd0f5" stroke="#286ba6" />
        <path d="M1 6H11V14H1Z" fill="#d3effd" stroke="#286ba6" />
        <path d="M11 6 15 2" stroke="#286ba6" />
        <path d="M3 8.500H9" stroke="#d0271f" />
        <path d="M3 11.500H9" stroke="#3aa145" />
      </>
    ),
  },
  {
    label: "日光路径",
    drawing: (
      <>
        <circle cx="7" cy="7" r="3.500" fill="#fff4c4" stroke="#d9901a" />
        <path d="M7 0V2M7 12V14M0 7H2M2 2 4 4M12 2 10 4M2 12 4 10" stroke="#d9901a" />
        {redCross}
      </>
    ),
  },
  {
    label: "阴影",
    drawing: (
      <>
        <circle cx="7" cy="6" r="4.500" fill="#d9efff" stroke="#4f87b8" />
        <path d="M2 13H10" strokeWidth="2" stroke="#8aa" />
        {redCross}
      </>
    ),
  },
  {
    label: "裁剪视图",
    drawing: (
      <>
        <path d="M4 14V4H16M7 14V7H13M0 12H4" stroke="#286ba6" strokeWidth="1.400" />
        {redCross}
      </>
    ),
  },
  { label: "显示裁剪区域", drawing: <><path d="M4 14V4H9M7 14V8H10M0 12H4" stroke="#286ba6" strokeWidth="1.400" />{bulb}</> },
  { label: "临时隐藏", drawing: <path d="M0 4 2 7Q4 11 7 10L8 7Q11 5 13 7 13 11 10 11 8 11 8 8M7 8Q4 5 2 7M13 8 15 5 11 2" /> },
  { label: "显示隐藏图元", drawing: <><circle cx="8" cy="6" r="3" fill="#d9efff" stroke="#2f83d6" /><path d="M7 10H9V13H7Z" /></> },
  { label: "临时视图属性", drawing: <><path d="M1 4H13V13H1Z" strokeDasharray="2 1" strokeWidth="1.600" /><path d="M8 8H15V14H8Z" fill="#fff" /><circle cx="11" cy="11" r="1.500" /></> },
  {
    label: "分析模型",
    drawing: (
      <>
        <path d="M1 6 5 2H14M1 6H11M5 2V14M9 2V14M1 6V14M11 6V14M1 9H11" />
        <path d="M4 14V9M8 14V9" stroke="#d0271f" />
        <circle cx="13" cy="6" r="3" fill="#ffe28a" stroke="#e39b1e" />
      </>
    ),
  },
  { label: "显示约束", drawing: <><path d="M1 0V5M15 0V5M1 2.500H15M4 0.500 2 2.500 4 4.500M12 0.500 14 2.500 12 4.500" /><path d="M1.500 6V14M2 13.500H8" strokeDasharray="2 1" /><path d="M9 10H15V15H9ZM10.500 10V7H13.500V10" fill="#777" /></> },
];

function StatusBar() {
  return (
    <footer className="flex h-[17px] shrink-0 items-center bg-[#f0f0f2] pl-5">
      <button className="mr-[15px] w-11 whitespace-pre">1  :  100</button>
      <div className="flex gap-[5px]">
        {viewControls.map((control) => (
          <button key={control.label} aria-label={control.label}><SmallIcon>{control.drawing}</SmallIcon></button>
        ))}
      </div>
      <button aria-label="向左" className="ml-1.5"><ChevronLeft className="size-3 text-[#555]" strokeWidth={3} /></button>
      <div className="flex h-full flex-1"><div className="flex-[378]" /><div className="h-full w-[17px] bg-[#cbcbcd]" /><div className="flex-[378]" /></div>
      <button aria-label="向右" className="mr-0.5"><ChevronRight className="size-3 text-[#555]" strokeWidth={3} /></button>
      <svg viewBox="0 0 18 17" className="h-[17px] w-[18px]" fill="#bbb">
        <path d="M13 7H15V9H13ZM10 10H12V12H10ZM13 10H15V12H13ZM7 13H9V15H7ZM10 13H12V15H10ZM13 13H15V15H13Z" />
      </svg>
    </footer>
  );
}

export default function App() {
  return (
    <div className="relative flex h-screen flex-col overflow-hidden bg-[#f0f0f2] font-['Open_Sans','Noto_Sans_CJK_SC',sans-serif] text-[12px] leading-4 text-[#1c1c1c]">
      {/* Shared gradients for the tool icons */}
      <svg className="absolute size-0" aria-hidden="true">
        <defs>
          <linearGradient id="metal" x1="0" y1="0" x2="0" y2="1"><stop offset="0" stopColor="#c3c9ce" /><stop offset="0.4" stopColor="#fafafa" /><stop offset="1" stopColor="#9ba3aa" /></linearGradient>
          <linearGradient id="metalV"><stop offset="0" stopColor="#b3b9bf" /><stop offset="0.4" stopColor="#fafafa" /><stop offset="1" stopColor="#a4abb2" /></linearGradient>
          <linearGradient id="pipeH" x1="0" y1="0" x2="0" y2="1"><stop offset="0" stopColor="#d5d8da" /><stop offset="0.4" stopColor="#fff" /><stop offset="1" stopColor="#989ea4" /></linearGradient>
          <linearGradient id="blue"><stop offset="0" stopColor="#9bd0f5" /><stop offset="0.5" stopColor="#e8f6ff" /><stop offset="1" stopColor="#4e9fdc" /></linearGradient>
        </defs>
      </svg>
      <Header />
      <Ribbon />
      <QuickAccess />
      <div className="h-[25px] shrink-0 bg-[#e3e3e3]" />
      <div className="flex min-h-0 flex-1">
        <aside className="flex w-[221px] shrink-0 flex-col border-r border-[#ddd]">
          <Properties />
          <Browser />
        </aside>
        <div className="ml-0.5 flex min-w-0 flex-1 flex-col border-t border-l-2 border-[#666]">
          <div className="flex min-h-0 flex-1">
            <Drawing />
            <div className="flex w-[18px] bg-[#f0f0f2] pl-px">
              <div className="flex w-4 flex-col items-center">
                <button aria-label="向上" className="flex h-[17px] items-center"><ChevronUp className="size-3 text-[#555]" strokeWidth={3} /></button>
                <div className="flex w-full flex-1 flex-col"><div className="flex-[314]" /><div className="h-[17px] bg-[#cbcbcd]" /><div className="flex-[314]" /></div>
                <button aria-label="向下" className="flex h-[17px] items-center"><ChevronDown className="size-3 text-[#555]" strokeWidth={3} /></button>
              </div>
            </div>
          </div>
          <StatusBar />
        </div>
      </div>
      {/* Pointer */}
      <svg viewBox="0 0 12 20" className="pointer-events-none absolute top-[156px] left-[993px] h-5 w-3">
        <path d="M0.500 1V16L4 12.500 6.500 18.500 9 17.500 6.500 11.500H11Z" fill="#fff" stroke="#000" />
      </svg>
    </div>
  );
}
